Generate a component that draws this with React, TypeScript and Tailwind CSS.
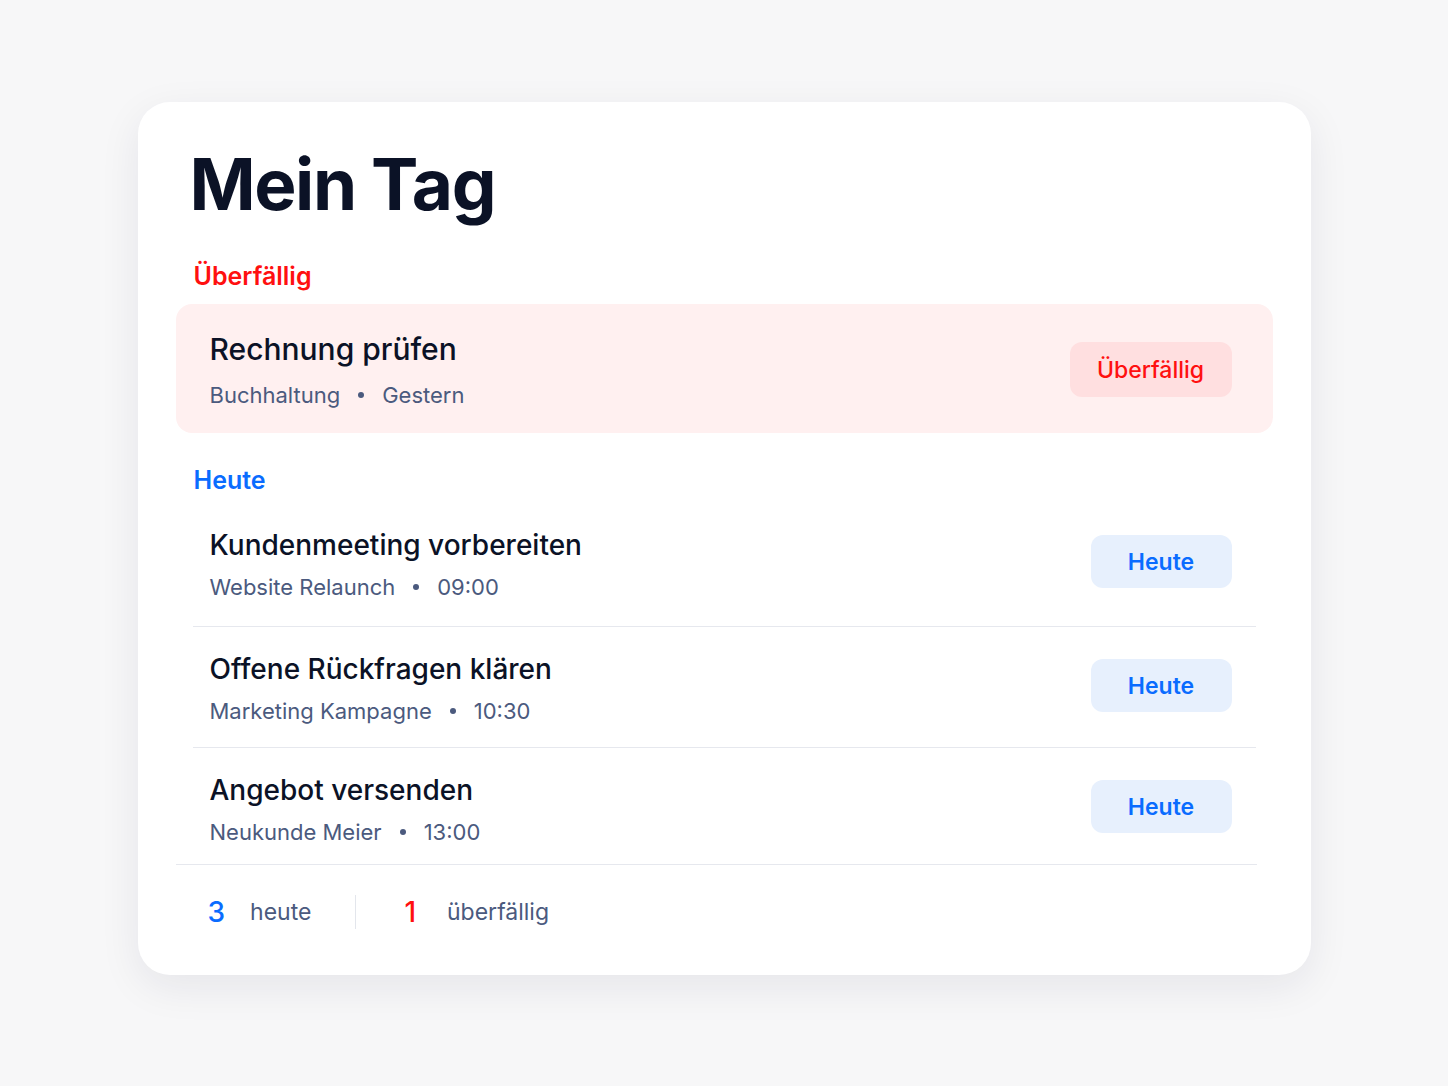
import React from "react";

type Task = {
  title: string;
  project: string;
  time: string;
};

const todayTasks: Task[] = [
  { title: "Kundenmeeting vorbereiten", project: "Website Relaunch", time: "09:00" },
  { title: "Offene Rückfragen klären", project: "Marketing Kampagne", time: "10:30" },
  { title: "Angebot versenden", project: "Neukunde Meier", time: "13:00" },
];

const rowPadding = ["pb-[24px] border-b border-[#e6e8ee]", "pb-[21px] border-b border-[#e6e8ee]", "pb-[17px]"];

function Meta({ project, time }: { project: string; time: string }) {
  return (
    <div className="flex items-center gap-[18px] text-[22px] leading-[30px] text-[#4b5a7e]">
      <span>{project}</span>
      <span className="w-[6px] h-[6px] rounded-full bg-[#4b5a7e]" />
      <span>{time}</span>
    </div>
  );
}

export default function App() {
  return (
    <div
      className="min-h-screen flex items-center justify-center bg-[#f7f7f8] pb-[9px]"
      style={{ fontFamily: "Inter, 'Noto Sans', sans-serif" }}
    >
      <div className="w-[1173px] bg-white rounded-[32px] shadow-[0_12px_40px_rgba(20,30,60,0.08)] px-[38px] pt-[47px] pb-[46px]">
        <h1 className="pl-[14px] text-[71px] leading-none font-bold tracking-[-0.02em] text-[#0b1226]">
          Mein Tag
        </h1>

        <div className="mt-[41px] pl-[18px] text-[25px] leading-[30px] font-semibold text-[#ff1010]">
          Überfällig
        </div>

        <div className="mt-[13px] flex items-center justify-between bg-[#fff0f0] rounded-[16px] pl-[34px] pr-[41px] pt-[26px] pb-[23px]">
          <div className="flex flex-col gap-[12px]">
            <div className="text-[30px] leading-[38px] font-medium text-[#0b1226]">
              Rechnung prüfen
            </div>
            <Meta project="Buchhaltung" time="Gestern" />
          </div>
          <div className="w-[162px] h-[55px] rounded-[12px] bg-[#ffdfe0] flex items-center justify-center text-[23px] font-medium text-[#ff1010]">
            Überfällig
          </div>
        </div>

        <div className="mt-[32px] pl-[18px] text-[25px] leading-[30px] font-semibold text-[#0a6cff]">
          Heute
        </div>

        <div className="mt-[8px] mx-[17px]">
          {todayTasks.map((task, i) => (
            <div
              key={task.title}
              className={"flex items-center justify-between pl-[17px] pr-[24px] pt-[23px] " + rowPadding[i]}
            >
              <div className="flex flex-col gap-[8px]">
                <div className="text-[28px] leading-[38px] font-medium text-[#0b1226]">
                  {task.title}
                </div>
                <Meta project={task.project} time={task.time} />
              </div>
              <div className="w-[141px] h-[53px] rounded-[12px] bg-[#e7f0fd] flex items-center justify-center text-[23px] font-semibold text-[#0a6cff] mb-[4px]">
                Heute
              </div>
            </div>
          ))}
        </div>

        <div className="border-t border-[#e6e8ee] mr-[16px] pt-[30px] pl-[32px] flex items-center">
          <span className="text-[28px] leading-[34px] font-medium text-[#0a6cff]">3</span>
          <span className="ml-[25px] text-[23px] text-[#4b5a7e]">heute</span>
          <span className="ml-[44px] w-px h-[34px] bg-[#e3e6ec]" />
          <span className="ml-[48px] text-[28px] leading-[34px] font-medium text-[#ff1010]">1</span>
          <span className="ml-[31px] text-[23px] text-[#4b5a7e]">überfällig</span>
        </div>
      </div>
    </div>
  );
}
